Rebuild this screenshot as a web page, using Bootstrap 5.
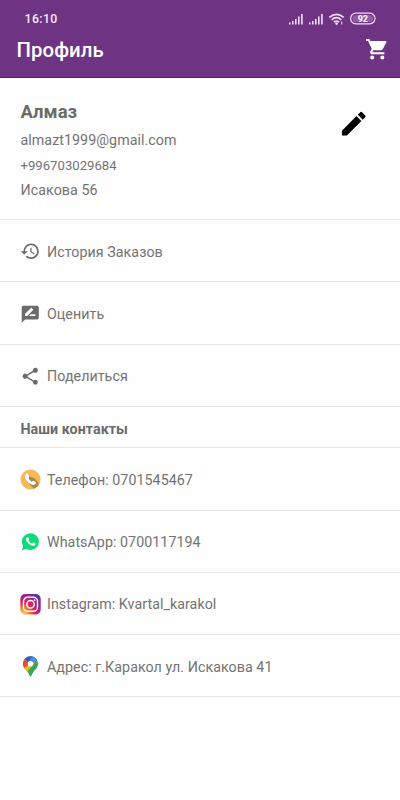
<!DOCTYPE html>
<html lang="ru">
<head>
<meta charset="utf-8">
<meta name="viewport" content="width=device-width, initial-scale=1">
<title>Профиль</title>
<link href="https://cdn.jsdelivr.net/npm/bootstrap@5.3.0/dist/css/bootstrap.min.css" rel="stylesheet">
<style>
body{font-family:Roboto,"Liberation Sans",sans-serif;font-size:14.25px;line-height:20px;letter-spacing:.05px;color:#737373;background:#fefefe;height:800px;overflow:hidden}
svg{display:block;flex:none}
.app-head{background:#6f3383;height:78px;border-bottom:1px solid #542466;color:#fff}
.status{height:36px;padding:1px 23px 0 24.5px}
.clock{font-size:12.3px;font-weight:500;letter-spacing:.4px;color:#fbe9ff}
.title-row{height:27px;padding:0 11px 0 16.5px}
.page-title{font-size:20.4px;line-height:27px;font-weight:500;letter-spacing:.05px;padding-top:2px}
.profile{height:142px;padding:20.5px 31px 0 20.5px;border-bottom:1px solid #e9e9e9}
.user-name{font-size:18.5px;font-weight:700;line-height:26px;color:#6b6b6b;margin-bottom:3px;letter-spacing:0}
.user-line{line-height:25px}
.phone-line{font-size:13.15px;letter-spacing:0}
.pencil{margin-top:9px}
.menu-row{height:62.25px;padding:2px 20px 0;border-color:#e9e9e9!important;background:none;color:inherit}
.menu-row .glyph{width:21px;margin-right:6px}
.section-title{height:41.5px;padding:3px 20.5px 0;font-size:14.25px;line-height:20px;font-weight:700;color:#6b6b6b;border-bottom:1px solid #e9e9e9}
</style>
<script src="https://cdn.jsdelivr.net/npm/bootstrap@5.3.0/dist/js/bootstrap.bundle.min.js"></script>
</head>
<body>
<header class="app-head">
  <div class="status d-flex align-items-center justify-content-between">
    <span class="clock">16:10</span>
    <svg width="89" height="14" viewBox="0 0 89 14" fill="none" stroke="#f6dcfb">
      <path stroke-width="1.6" d="M1.8 12.5v-2M4.8 12.5V9M7.8 12.5V7M10.8 12.5V4.5M13.9 12.5V2M21.8 12.5v-2M24.8 12.5V9M27.8 12.5V7M30.8 12.5V4.5M33.9 12.5V2"/>
      <path stroke-width="1.6" d="M41.3 5.4Q48.5-.8 55.7 5.4M43.6 7.8Q48.5 3.6 53.4 7.8M45.8 10.1Q48.5 7.9 51.2 10.1"/>
      <circle cx="48.5" cy="11.6" r="1.3" fill="#f6dcfb" stroke="none"/><path d="M53.7 9.5v3"/>
      <rect x="62.6" y="1.2" width="24.400" height="10.600" rx="5.200" stroke-width="1.200"/>
      <rect x="64.4" y="2.9" width="20.800" height="7.200" rx="3.600" fill="#915aa2" stroke="none"/>
      <text x="74.8" y="9.7" text-anchor="middle" font-family="Roboto" font-size="9" font-weight="700" letter-spacing="0" fill="#fff" stroke="none">92</text>
    </svg>
  </div>
  <div class="title-row d-flex align-items-center justify-content-between">
    <h1 class="page-title m-0">Профиль</h1>
    <svg width="24.5" height="24.5" viewBox="0 0 24 24" fill="#fff"><path d="M7 18a2 2 0 1 0 0 4 2 2 0 0 0 0-4zM1 2v2h2l3.600 7.590-1.350 2.450c-.16.280-.25.610-.25.960 0 1.100.9 2 2 2h12v-2H7.420c-.14 0-.25-.11-.25-.25l.03-.12.900-1.630h7.450c.750 0 1.410-.41 1.750-1.030l3.580-6.490A1 1 0 0 0 20 4H5.210l-.94-2H1zm16 16a2 2 0 1 0 0 4 2 2 0 0 0 0-4z"/></svg>
  </div>
</header>
<main>
  <section class="profile d-flex justify-content-between align-items-start">
    <div>
      <div class="user-name">Алмаз</div>
      <div class="user-line">almazt1999@gmail.com</div>
      <div class="user-line phone-line">+996703029684</div>
      <div class="user-line">Исакова 56</div>
    </div>
    <svg class="pencil" width="31.500" height="31.500" viewBox="0 0 24 24" fill="#000"><path d="M3 17.250V21h3.750L17.810 9.940l-3.750-3.750L3 17.250zM20.710 7.040a1 1 0 0 0 0-1.410l-2.340-2.340a1 1 0 0 0-1.410 0l-1.830 1.830 3.750 3.750 1.830-1.830z"/></svg>
  </section>
  <div class="list-group list-group-flush rounded-0">
    <div class="list-group-item menu-row border-0 border-bottom d-flex align-items-center"><span class="glyph"><svg width="20.500" height="20.500" viewBox="0 0 24 24" fill="#6b6b6b"><path d="M13 3a9 9 0 0 0-9 9H1l3.890 3.890.07.140L9 12H6c0-3.870 3.130-7 7-7s7 3.130 7 7-3.130 7-7 7c-1.930 0-3.680-.79-4.940-2.060l-1.420 1.420A8.950 8.950 0 0 0 13 21a9 9 0 0 0 0-18zm-1 5v5l4.280 2.540.720-1.210-3.500-2.080V8H12z"/></svg></span>История Заказов</div>
    <div class="list-group-item menu-row border-0 border-bottom d-flex align-items-center"><span class="glyph"><svg width="20.500" height="20.500" viewBox="0 0 24 24" fill="#6b6b6b"><path d="M20 2H4c-1.100 0-1.990.9-1.990 2L2 22l4-4h14c1.100 0 2-.9 2-2V4c0-1.100-.9-2-2-2zM6 14v-2.470l6.880-6.880c.2-.2.510-.2.710 0l1.770 1.770c.2.200.2.510 0 .710L8.470 14H6zm12 0h-7.500l2-2H18v2z"/></svg></span>Оценить</div>
    <div class="list-group-item menu-row border-0 border-bottom d-flex align-items-center"><span class="glyph"><svg width="20.500" height="20.500" viewBox="0 0 24 24" fill="#6b6b6b"><path d="M18 16.080c-.76 0-1.440.3-1.960.770L8.910 12.700c.05-.23.090-.46.090-.7s-.04-.47-.09-.7l7.050-4.110A2.990 2.990 0 1 0 15 5c0 .240.040.470.090.700L8.040 9.810A2.990 2.990 0 1 0 8.040 14.190l7.120 4.160c-.05.210-.08.430-.08.650A2.920 2.920 0 1 0 18 16.080z"/></svg></span>Поделиться</div>
  </div>
  <h2 class="section-title d-flex align-items-center m-0">Наши контакты</h2>
  <div class="list-group list-group-flush rounded-0">
    <div class="list-group-item menu-row border-0 border-bottom d-flex align-items-center"><span class="glyph"><svg width="21" height="21" viewBox="0 0 21 21"><circle cx="10.500" cy="10.500" r="10" fill="#f5b955"/><path fill="#a9874f" d="M7.500 4.500l2.200 2.900 5.200 2.200 4 5.200a10 10 0 0 1-4.500 4.900L7 13z"/><path fill="#fff" d="M5.600 5.100q1.500-1.200 2.500.2l1.100 2.100q.3.700-.9 1.700 1 2.300 3.500 3.600 1-1.300 1.800-.9l2.200 1.400q.8.600-.4 1.900-1.400 1.400-3.700.5-4-1.500-5.800-4.900-1.600-3.400-.3-5.600z"/></svg></span>Телефон: 0701545467</div>
    <div class="list-group-item menu-row border-0 border-bottom d-flex align-items-center"><span class="glyph"><svg width="21" height="21" viewBox="0 0 21 21"><path fill="#0fdc78" d="M2 18.200l1.100-4.300A8.500 8.300 0 1 1 6.500 17z"/><path fill="#fff" d="M7.200 5.200h.8q.3 0 .5.400l.8 1.800q.1.300-.8 1.400 1.200 2 3.500 2.900l1-1.200q.3-.2.600 0l1.700.9q.4.200.2.800-.4 1.500-2.200 1.600-2.200-.1-4.500-2.100-2.800-2.500-2.900-4.300 0-1.400 1.300-2.200z"/></svg></span>WhatsApp: 0700117194</div>
    <div class="list-group-item menu-row border-0 border-bottom d-flex align-items-center"><span class="glyph"><svg width="21" height="21" viewBox="0 0 21 21" fill="none"><defs><radialGradient id="ig" cx=".12" cy="1" r="1.150"><stop offset="0" stop-color="#ffd34f"/><stop offset=".22" stop-color="#f99a35"/><stop offset=".48" stop-color="#e52c4b"/><stop offset=".73" stop-color="#b71c85"/><stop offset="1" stop-color="#5c2fa5"/></radialGradient></defs><rect x=".3" y=".1" width="20.400" height="20.400" rx="4.800" fill="url(#ig)"/><rect x="3.500" y="3.300" width="14" height="14" rx="4" stroke="#fff" stroke-width="1.400"/><circle cx="10.500" cy="10.300" r="3.700" stroke="#fff" stroke-width="1.500"/><circle cx="14.700" cy="6.100" r=".9" fill="#fff"/></svg></span>Instagram: Kvartal_karakol</div>
    <div class="list-group-item menu-row border-0 border-bottom d-flex align-items-center"><span class="glyph"><svg width="21" height="21" viewBox="0 0 21 21"><defs><clipPath id="pin"><path d="M10.500.2A7.500 7.500 0 0 0 3 7.700c0 4 2.800 5.700 4.800 8.500 1.300 1.800 1.800 4.500 2.700 4.500s1.400-2.700 2.700-4.500c2-2.800 4.800-4.500 4.800-8.500A7.500 7.500 0 0 0 10.500.2z"/></clipPath></defs><g clip-path="url(#pin)"><path fill="#3ba55b" d="M0 0h21v21H0z"/><path fill="#f9bd13" d="M0 15l12.500-14 2.500 5-11 14z"/><path fill="#e34b3d" d="M0 0h8l2 8-7.500 5z"/><path fill="#2966bd" d="M4.700 2.900L8 0h5l-3 7z"/><path fill="#4a8ee8" d="M8-.5h10v3.700L9.800 8.100 8 7l5-6.200z"/><path fill="#4a8ee8" d="M13 0l5 3.600-5 3.800-4.500-1.100z"/></g><circle cx="10.500" cy="7.700" r="2.800" fill="#fff"/></svg></span>Адрес: г.Каракол ул. Искакова 41</div>
  </div>
</main>
</body>
</html>
